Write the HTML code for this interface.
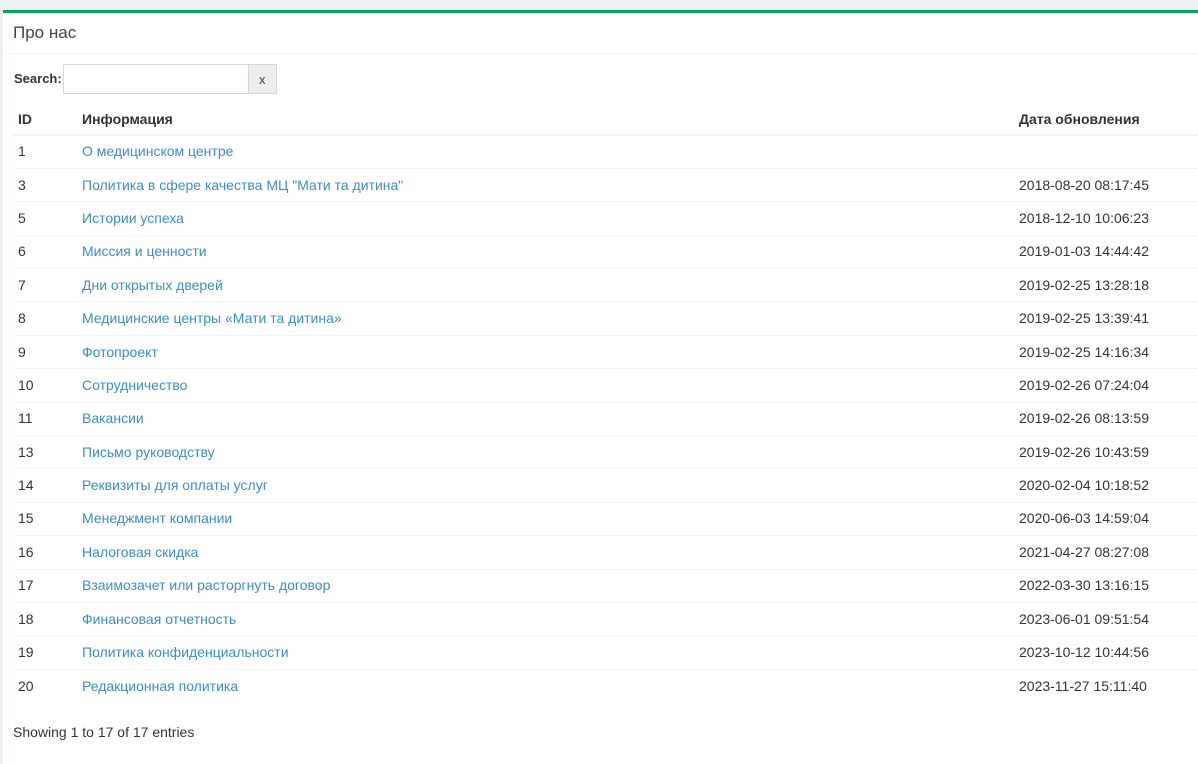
<!DOCTYPE html>
<html><head><meta charset="utf-8"><style>
*{box-sizing:border-box}
body{margin:0;background:#ecf0f5;font-family:"Liberation Sans",Arial,sans-serif;font-size:14px;color:#333;width:1198px;height:764px;overflow:hidden}
.box{position:absolute;left:3px;top:10px;right:0;bottom:0;background:#fff;border-top:3px solid #00a65a}
.hd{height:41px;border-bottom:1px solid #f4f4f4;padding:0 10px;font-size:17px;line-height:39px;color:#444}
.search{position:absolute;left:11px;top:51px;height:30px;display:flex;align-items:center;font-weight:bold;font-size:13px}
.search span{position:relative;top:-1px}
.search .in{width:186px;height:30px;border:1px solid #d2d6de;margin-left:1px}
.search .x{width:28px;height:30px;border:1px solid #d2d6de;border-left:none;background:#eee;font-weight:normal;font-size:13px;display:flex;align-items:center;justify-content:center;color:#444}
table{position:absolute;left:10px;top:90px;width:1185px;border-collapse:collapse;table-layout:fixed}
th{text-align:left;font-weight:bold;height:32px;border-bottom:2px solid #f4f4f4;padding:0 5px}
td{height:33.4px;padding:0 5px 1px;border-top:1px solid #f4f4f4}
tr:first-child td{border-top:none}
a{color:#3c8dbc;text-decoration:none}
.foot{position:absolute;left:10px;top:711px}
</style></head><body>
<div class="box">
<div class="hd">Про нас</div>
<div class="search"><span>Search:</span><div class="in"></div><div class="x">x</div></div>
<table>
<thead><tr><th style="width:64px">ID</th><th style="width:937px">Информация</th><th>Дата обновления</th></tr></thead>
<tbody>
<tr><td>1</td><td><a>О медицинском центре</a></td><td></td></tr>
<tr><td>3</td><td><a>Политика в сфере качества МЦ "Мати та дитина"</a></td><td>2018-08-20 08:17:45</td></tr>
<tr><td>5</td><td><a>Истории успеха</a></td><td>2018-12-10 10:06:23</td></tr>
<tr><td>6</td><td><a>Миссия и ценности</a></td><td>2019-01-03 14:44:42</td></tr>
<tr><td>7</td><td><a>Дни открытых дверей</a></td><td>2019-02-25 13:28:18</td></tr>
<tr><td>8</td><td><a>Медицинские центры «Мати та дитина»</a></td><td>2019-02-25 13:39:41</td></tr>
<tr><td>9</td><td><a>Фотопроект</a></td><td>2019-02-25 14:16:34</td></tr>
<tr><td>10</td><td><a>Сотрудничество</a></td><td>2019-02-26 07:24:04</td></tr>
<tr><td>11</td><td><a>Вакансии</a></td><td>2019-02-26 08:13:59</td></tr>
<tr><td>13</td><td><a>Письмо руководству</a></td><td>2019-02-26 10:43:59</td></tr>
<tr><td>14</td><td><a>Реквизиты для оплаты услуг</a></td><td>2020-02-04 10:18:52</td></tr>
<tr><td>15</td><td><a>Менеджмент компании</a></td><td>2020-06-03 14:59:04</td></tr>
<tr><td>16</td><td><a>Налоговая скидка</a></td><td>2021-04-27 08:27:08</td></tr>
<tr><td>17</td><td><a>Взаимозачет или расторгнуть договор</a></td><td>2022-03-30 13:16:15</td></tr>
<tr><td>18</td><td><a>Финансовая отчетность</a></td><td>2023-06-01 09:51:54</td></tr>
<tr><td>19</td><td><a>Политика конфиденциальности</a></td><td>2023-10-12 10:44:56</td></tr>
<tr><td>20</td><td><a>Редакционная политика</a></td><td>2023-11-27 15:11:40</td></tr>
</tbody></table>
<div class="foot">Showing 1 to 17 of 17 entries</div>
</div>
</body></html>
